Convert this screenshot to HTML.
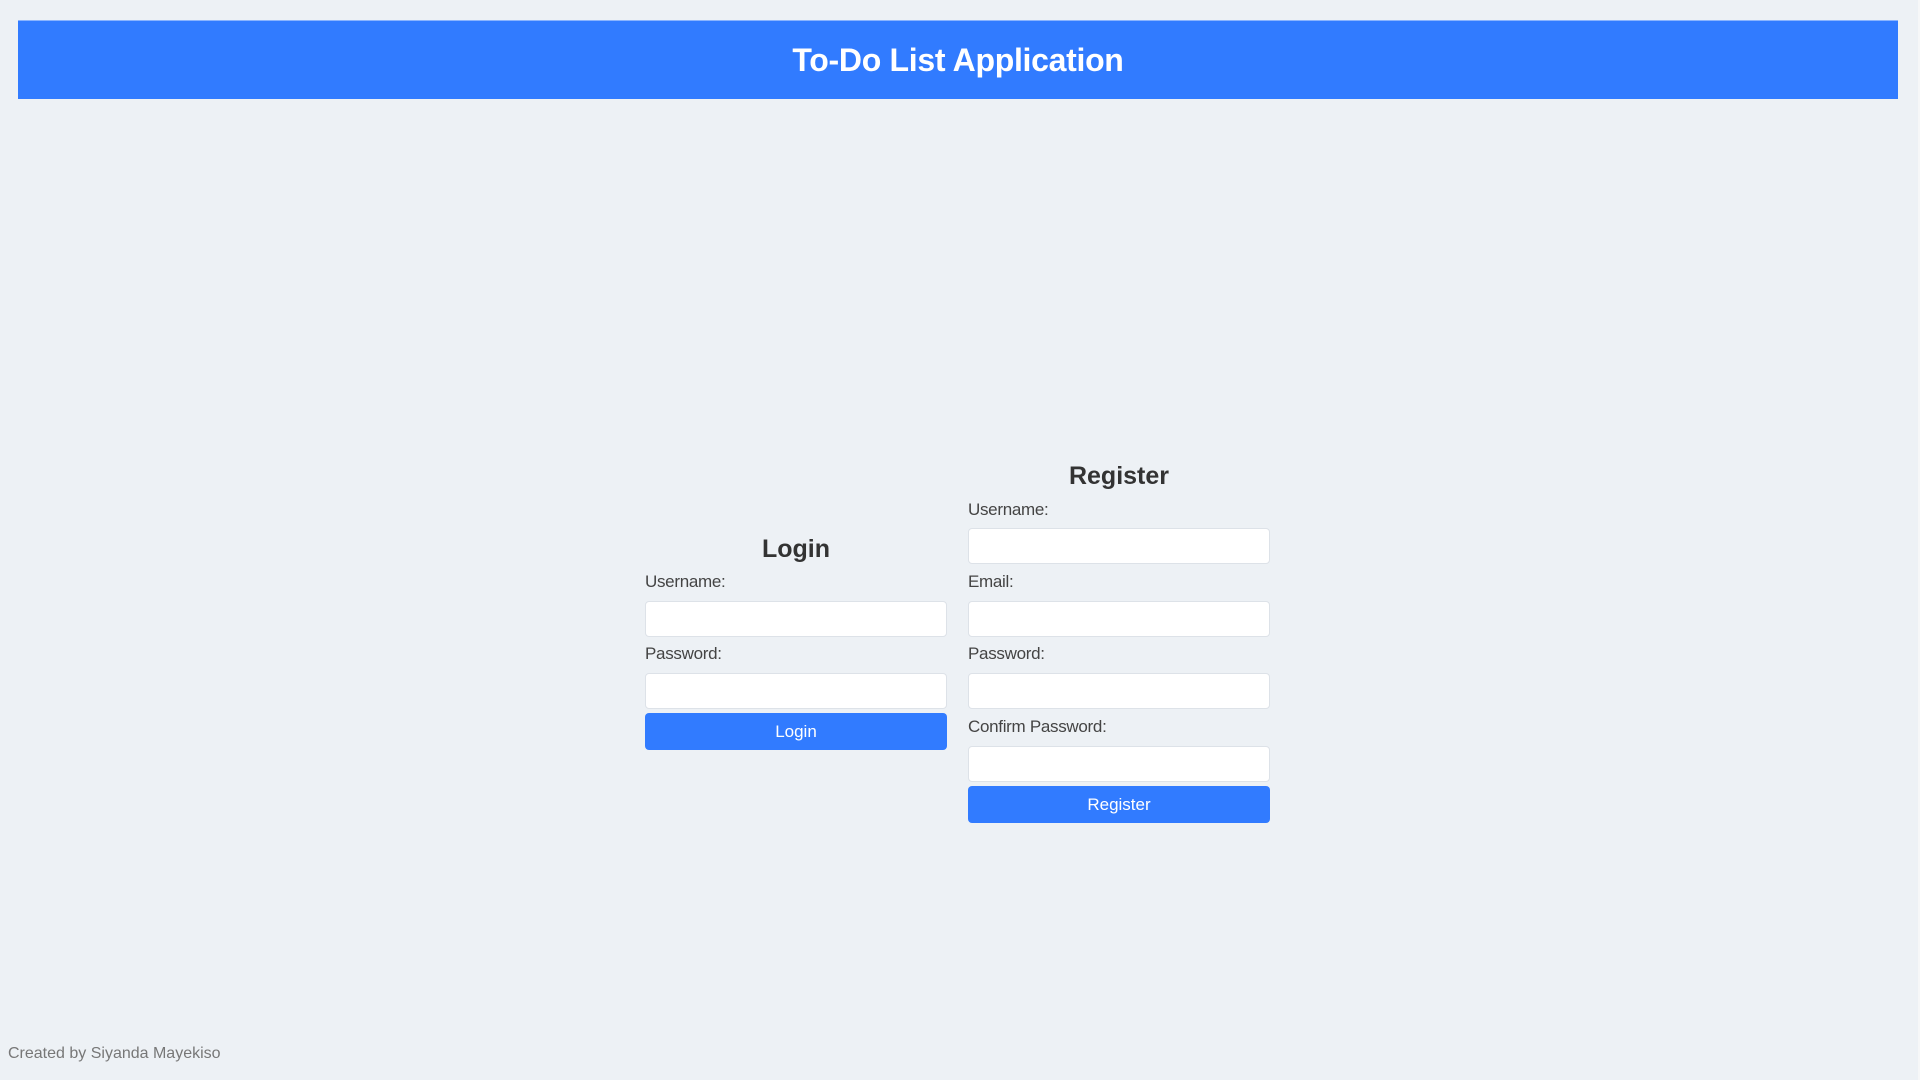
<!DOCTYPE html>
<html><head><meta charset="utf-8"><style>
html,body{margin:0;padding:0;width:1920px;height:1080px;background:#edf1f5;font-family:"Liberation Sans",sans-serif;overflow:hidden;position:relative}
.hdr{position:absolute;left:18px;top:20px;width:1880px;height:78px;background:#317bff;border-top:1px solid #8ab4ff}
.hdr h1{margin:0;color:#fff;font-size:32px;font-weight:bold;text-align:center;line-height:78px;letter-spacing:-0.3px}
.a{position:absolute}
.lbl{font-size:17px;color:#444;line-height:20px;letter-spacing:-0.3px}
.inp{width:300px;height:34px;background:#fff;border:1px solid #dde2e8;border-radius:4px}
.btn{width:302px;height:37px;background:#317bff;border-radius:4px;color:#fff;font-size:17px;text-align:center;line-height:37px}
.h2{font-size:25px;font-weight:bold;color:#333;width:302px;text-align:center;line-height:30px}
.foot{font-size:16px;color:#777;line-height:20px;left:8px;top:1044px}
.sb{position:absolute;right:0;top:0;width:2px;height:1080px;background:#f6f7f8}
</style></head><body>
<div class="hdr"><h1>To-Do List Application</h1></div>

<div class="a h2" style="left:645px;top:534px">Login</div>
<div class="a lbl" style="left:645px;top:572px">Username:</div>
<div class="a inp" style="left:645px;top:601px"></div>
<div class="a lbl" style="left:645px;top:644px">Password:</div>
<div class="a inp" style="left:645px;top:673px"></div>
<div class="a btn" style="left:645px;top:713px">Login</div>

<div class="a h2" style="left:968px;top:461px">Register</div>
<div class="a lbl" style="left:968px;top:500px">Username:</div>
<div class="a inp" style="left:968px;top:528px"></div>
<div class="a lbl" style="left:968px;top:572px">Email:</div>
<div class="a inp" style="left:968px;top:601px"></div>
<div class="a lbl" style="left:968px;top:644px">Password:</div>
<div class="a inp" style="left:968px;top:673px"></div>
<div class="a lbl" style="left:968px;top:717px">Confirm Password:</div>
<div class="a inp" style="left:968px;top:746px"></div>
<div class="a btn" style="left:968px;top:786px">Register</div>

<div class="a foot">Created by Siyanda Mayekiso</div>
<div class="sb"></div>
</body></html>
